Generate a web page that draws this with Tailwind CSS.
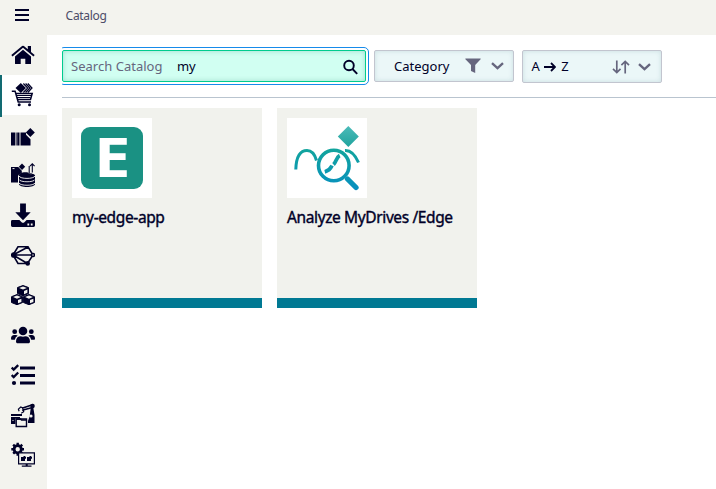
<!DOCTYPE html>
<html lang="en">
<head>
<meta charset="utf-8">
<title>Catalog</title>
<script src="https://cdn.jsdelivr.net/npm/@tailwindcss/browser@4"></script>
</head>
<body class="flex h-[489px] w-[716px] overflow-hidden bg-white font-['Noto_Sans',sans-serif] text-[#000028]">
<nav class="flex h-full w-[47px] shrink-0 flex-col bg-[#f3f3ee] text-[#000028]">
  <button class="flex h-[35px] shrink-0 items-center pl-[15px] pb-[5px]" aria-label="Menu">
    <svg width="14" height="12" viewBox="0 0 14 12" fill="currentColor"><path d="M0 0h14v2H0zM0 5h14v2H0zM0 10h14v2H0z"/></svg>
  </button>
  <a class="flex h-10 shrink-0 items-center pl-[11px]">
    <svg width="24" height="24" viewBox="0 0 24 24" fill="currentColor"><path d="M12 6.8 4 13.6V20.5q0 .5.5.5h5.2v-5.2h4.6V21h5.2q.5 0 .5-.5v-6.9z"/><path d="M.3 12.1 11.1 3q.9-.7 1.8 0l3.9 3.3V3h3.2v6l3.7 3.1-1.2 1.5L12 4.8 1.5 13.6z"/></svg>
  </a>
  <a class="relative flex h-10 shrink-0 items-center bg-white pl-[11px]">
    <span class="absolute left-0 top-0 h-[42px] w-[2px] bg-[#126b72]"></span>
    <svg width="24" height="26" viewBox="0 0 24 26" fill="none" stroke="currentColor"><path fill="currentColor" stroke="none" d="M9.8 1 15 6l-5.2 5L4.5 6z"/><path stroke-width="1.2" d="m12.4 1.5 4.3 4.5-4.3 4.5M14.6 1.5 18.9 6l-4.3 4.5M16.8 1.5 21 6l-4.2 4.5"/><path stroke-width="1.5" d="M.8 9.3h3.3L7.2 20H20M5 11.5h16.2l-1.7 6H6.6"/><path d="M5.5 13.5H20M6 15.5h13.5"/><circle cx="8.2" cy="22.8" r="1.5" fill="currentColor" stroke="none"/><circle cx="18.5" cy="22.8" r="1.5" fill="currentColor" stroke="none"/></svg>
  </a>
  <a class="flex h-10 shrink-0 items-center pl-[11px]">
    <svg width="24" height="24" viewBox="0 -3 24 24" fill="currentColor"><path d="M0 6.5h4.2v13H0zM4.8 6.5h.8v13h-.8zM6.2 6.5h2v13h-2zM8.7 6.5h.8v13h-.8zM10 6.5h5v2.3l4.5 4.5v6.2H10z"/><path d="m19.3 2 4.5 4.5-4.5 4.5-4.5-4.5z"/></svg>
  </a>
  <a class="flex h-10 shrink-0 items-center pl-[11px]">
    <svg width="24" height="24" viewBox="0 0 24 24" fill="currentColor"><path d="M0 4h7.2l3.6 3.8V10L8 11.5 7 13v6.5H0z"/><path d="m11 .5 3.2 3.2L11 6.9 7.8 3.7z"/><path fill="none" stroke="currentColor" stroke-width="1.1" d="M18.2 3v9.4M15.9 10.1l2.3 2.5 2.2-2.5M21.3 9.5V1M19 3.2 21.3.8l2.3 2.4"/><path fill="none" stroke="#f3f3ee" d="M1.5 5.6h2"/><path d="M8 12.2c0-2.4 5-3.5 9.6-2.5l.6 2.9 2.8-1.8c2 .3 3 1 3 1.9v8.2c0 4-16 4-16 0z"/><path stroke="#f3f3ee" fill="none" stroke-width=".9" d="M8 13c1.2 3.2 14.8 3.2 16 0M8 16.5c1.2 3 14.8 3 16 0M8 20c1.2 3 14.8 3 16 0"/></svg>
  </a>
  <a class="flex h-10 shrink-0 items-center pl-[11px]">
    <svg width="24" height="24" viewBox="0 0 24 24" fill="currentColor"><path d="M9.1.5h5.8v8.8h4.8L12 17.2 4.3 9.3h4.8z"/><path fill-rule="evenodd" d="M1.4 17h7l2.2 2.2q1.4 1.3 2.8 0l2.2-2.2h7Q24 17 24 18.4v4.2Q24 24 22.6 24H1.4Q0 24 0 22.6v-4.2Q0 17 1.4 17m15 3.6v1.8h1.8v-1.8zm3.4 0v1.8h1.8v-1.8z"/></svg>
  </a>
  <a class="flex h-10 shrink-0 items-center pl-[11px]">
    <svg width="24" height="24" viewBox="0 0 24 24" fill="none" stroke="currentColor" stroke-width="1.6"><path d="M2 12 7 3.8h10l5 8.2-5.5 8.5H7zM2 12h20M2 12 17 4M2 12l14.5 8.5"/><circle cx="2.7" cy="12" r="2" fill="currentColor"/><circle cx="22" cy="12" r="1.5" fill="#f3f3ee"/><circle cx="16.7" cy="20.4" r="1.5" fill="currentColor"/></svg>
  </a>
  <a class="flex h-10 shrink-0 items-center pl-[11px]">
    <svg width="24" height="24" viewBox="0 0 24 24" fill="currentColor" stroke="currentColor" stroke-linejoin="round"><path d="m12 2.5 5.5 2v6l-5.5 2.3-5.5-2.3v-6zM6 11.5l5.6 2.2v5.8L6 21.7l-5.5-2.2v-5.8zM18 11.5l5.5 2.2v5.8L18 21.7l-5.6-2.2v-5.8z"/><g fill="#f3f3ee" stroke="none"><path d="m12 3.5 3.9 1.4L12 6.5 8.1 4.9zM16.4 6.5v3.3L13 11.3V8zM6 12.6l3.9 1.5L6 15.7l-3.9-1.6zM10.4 15.7V19L7 20.3v-3.2zM18 12.6l3.9 1.5-3.9 1.6-3.9-1.6zM22.4 15.7V19L19 20.3v-3.2z"/></g></svg>
  </a>
  <a class="flex h-10 shrink-0 items-center pl-[11px]">
    <svg width="24" height="24" viewBox="0 0 24 24" fill="currentColor"><circle cx="12" cy="8" r="4.3"/><circle cx="3.7" cy="8.7" r="2.4"/><circle cx="20.3" cy="8.7" r="2.4"/><path d="M5 18.5c0-3.5 1.8-5.2 4.8-5.2q2.2.8 4.4 0c3 0 4.8 1.7 4.8 5.2 0 1.2-.6 1.8-1.8 1.8H6.8C5.6 20.3 5 19.7 5 18.5M0 15.7C0 13.2 1.2 12 3.2 12h1.5q1.3 0 2 .8-2.3 1.1-2.9 3.9H.8q-.8 0-.8-1M24 15.7c0-2.5-1.2-3.7-3.2-3.7h-1.5q-1.3 0-2 .8 2.3 1.1 2.9 3.9h3q.8 0 .8-1"/></svg>
  </a>
  <a class="flex h-10 shrink-0 items-center pl-[11px]">
    <svg width="24" height="24" viewBox="0 0 24 24" fill="currentColor"><path d="M9 3.5h15v3H9zM9 11h15v3H9zM9 18.5h15v3H9z"/><path fill="none" stroke="currentColor" stroke-width="2.3" d="m.7 4.6 2 2 4.5-4.5M.7 12l2 2 4.5-4.5"/><circle cx="3" cy="20" r="2.1"/></svg>
  </a>
  <a class="flex h-10 shrink-0 items-center pl-[11px]">
    <svg width="24" height="26" viewBox="0 0 24 26" fill="currentColor"><path d="M0 12h11v2H0zM0 15h9v1.5H4.5V22H0zM21.8 2.5l1.7 10.5v8H17v-2l1.7-4.8 1-8z"/><circle cx="20" cy="14" r="1.6" fill="#f3f3ee"/><path fill="none" stroke="currentColor" stroke-width="1.6" d="M22.3 2.6 11 6.2M20.6 5.8l-9.5 2.4"/><circle cx="21.5" cy="4" r="2.3"/><path fill="none" stroke="currentColor" stroke-width="1.2" d="M12.3 6.3 9.8 5 7.4 7.1l.7 2.1M12.3 7.2l.4 2.6-2.5 1.5"/><path fill="#f3f3ee" stroke="currentColor" stroke-width="1.4" d="M5.2 17h10.3v7.5H5.2z"/><path stroke="currentColor" stroke-width="1.4" d="M5.2 17h4.3l1 1h5"/><path fill="#f3f3ee" d="M1.5 18h1v1h-1z"/></svg>
  </a>
  <a class="flex h-10 shrink-0 items-center pl-[11px]">
    <svg width="24" height="26" viewBox="0 0 24 26" fill="none" stroke="currentColor"><circle cx="6.7" cy="7.2" r="3.6" stroke-width="2.8"/><path stroke-width="2.4" d="M6.7.8v3M6.7 10.8v3M.3 7.2h3M10 7.2h3M2.2 2.7l2.1 2.1M9.1 9.6l2.1 2.1M11.2 2.7 9.1 4.8M4.3 9.6l-2.1 2.1"/><path fill="#f3f3ee" stroke-width="1.2" d="M7.6 10.8h15.8v11H7.6z"/><path fill="currentColor" stroke="none" d="M10 15h2l1-1h1v1l1-.7v2.2l-1 .5v2h-4zM16 15h2l1-1h1v1l1-.7v2.2l-1 .5v2h-4zM14.7 22h2v1.5h3.8v1.2h-9.7v-1.2h3.9z"/></svg>
  </a>
</nav>
<div class="flex min-w-0 flex-1 flex-col">
  <header class="h-[35px] shrink-0 bg-[#f3f3ee] pl-[18.6px] pt-[8px] text-[12px] leading-4 tracking-[-0.3px] text-[#4c4c68]">Catalog</header>
  <main class="flex-1 pl-[15px]">
    <section class="flex h-[63px] items-start gap-2 overflow-hidden border-b border-[#b9c4cf] pt-[15px]">
      <label class="flex h-8 w-[304px] shrink-0 items-center rounded-[2px] border border-[#00cc8e] bg-[#d1fff2] pl-[8px] pr-[7px] text-[13px] outline outline-1 outline-offset-2 outline-[#168bea] shadow-[inset_0_0_5px_rgba(0,110,90,.24)]">
        <span class="w-[106px] pt-px tracking-[0.02px] text-[#66667e]">Search Catalog</span>
        <span class="flex-1 pt-px tracking-[-0.2px]">my</span>
        <svg class="mt-px" width="15" height="16" viewBox="0 0 15 16" fill="none" stroke="currentColor" stroke-width="1.9"><circle cx="6" cy="6.5" r="4.8"/><path d="m9.5 10 4.7 4.8"/></svg>
      </label>
      <button class="flex h-8 w-[140px] shrink-0 items-center rounded-[2px] border border-[#c2c5cf] bg-[#ebf7f8] pl-[19px] text-[13px] shadow-[inset_0_0_5px_rgba(0,80,90,.14)]">
        <span class="w-[71px] pt-px text-left">Category</span>
        <svg width="16" height="16" viewBox="0 0 16 16" fill="#66667e"><path d="M.8.5h14.4q.9 0 .4.8L10.2 7v8L6 13V7L.4 1.3Q-.1.5.8.5"/></svg>
        <svg class="ml-[10px]" width="13" height="8" viewBox="0 0 13 8" fill="none" stroke="#66667e" stroke-width="2.3"><path d="m1 1.2 5.5 5 5.5-5"/></svg>
      </button>
      <button class="flex h-[33px] w-[140px] shrink-0 items-center rounded-[2px] border border-[#c2c5cf] bg-[#ebf7f8] pl-[8.5px] text-[13px] shadow-[inset_0_0_5px_rgba(0,80,90,.14)]">
        <span>A</span>
        <svg class="ml-[4.5px]" width="12" height="10" viewBox="0 0 12 10" fill="none" stroke="currentColor" stroke-width="1.8"><path d="M0 5h11M7 1l4 4-4 4"/></svg>
        <span class="ml-[5px] w-[51px] text-left">Z</span>
        <svg width="18" height="14" viewBox="0 0 18 14" fill="none" stroke="#66667e" stroke-width="1.7"><path d="M4.8.5v11.8M1 8.8l3.8 3.7 3.7-3.7M13.2 13.5V1.7M9.4 5.2l3.8-3.7L17 5.2"/></svg>
        <svg class="ml-[8px] mt-px" width="13" height="8" viewBox="0 0 13 8" fill="none" stroke="#66667e" stroke-width="2.3"><path d="m1 1.2 5.5 5 5.5-5"/></svg>
      </button>
    </section>
    <section class="flex gap-[15px] pt-[10px]">
      <article class="flex h-[200px] w-[200px] flex-col border-b-[10px] border-[#007993] bg-[#f1f2ed] px-[10px] pt-[10px]">
        <div class="flex size-20 shrink-0 items-center justify-center bg-white">
          <div class="flex size-[62px] items-center justify-center rounded-[9px] bg-[#1a9183] font-['Open_Sans',sans-serif] text-[54px] font-bold leading-none text-white"><span class="mb-[4px] scale-x-[1.22]">E</span></div>
        </div>
        <h2 class="mt-[7px] whitespace-nowrap text-[15.5px] leading-6 tracking-[-0.38px] [-webkit-text-stroke:0.38px]">my-edge-app</h2>
      </article>
      <article class="flex h-[200px] w-[200px] flex-col border-b-[10px] border-[#007993] bg-[#f1f2ed] px-[10px] pt-[10px]">
        <div class="size-20 shrink-0 bg-white">
          <svg width="80" height="80" viewBox="0 0 80 80" fill="none"><defs><linearGradient id="teal" x1="0" y1="30" x2="0" y2="72" gradientUnits="userSpaceOnUse"><stop stop-color="#12a59c"/><stop offset="1" stop-color="#078fc0"/></linearGradient><linearGradient id="gem" x1="0" y1="0" x2="0" y2="1"><stop stop-color="#4bbbb9"/><stop offset="1" stop-color="#20a39d"/></linearGradient></defs><path fill="url(#gem)" d="m61.3 8 10.5 10.5L61.3 29 50.8 18.5z"/><g stroke="url(#teal)" stroke-width="3"><path d="M8.8 51.5C9.2 38 14 32.5 20 32.5S28 37 29.5 42.5M58 32.5q8-.5 13.5 12"/><circle cx="46.8" cy="47.5" r="15.3" stroke-width="3.6"/><path stroke-width="5.3" stroke-linecap="round" d="m60.5 61 8.5 8.5"/><path stroke-width="3.8" d="M52.7 37.5c-3.2 1.5-3.5 6.5-6.2 9M45 47.5c-1 2-1.5 4.9-7.2 6.3"/></g></svg>
        </div>
        <h2 class="mt-[7px] whitespace-nowrap text-[15.5px] leading-6 tracking-[-0.38px] [-webkit-text-stroke:0.38px]">Analyze MyDrives /Edge</h2>
      </article>
    </section>
  </main>
</div>
</body>
</html>
